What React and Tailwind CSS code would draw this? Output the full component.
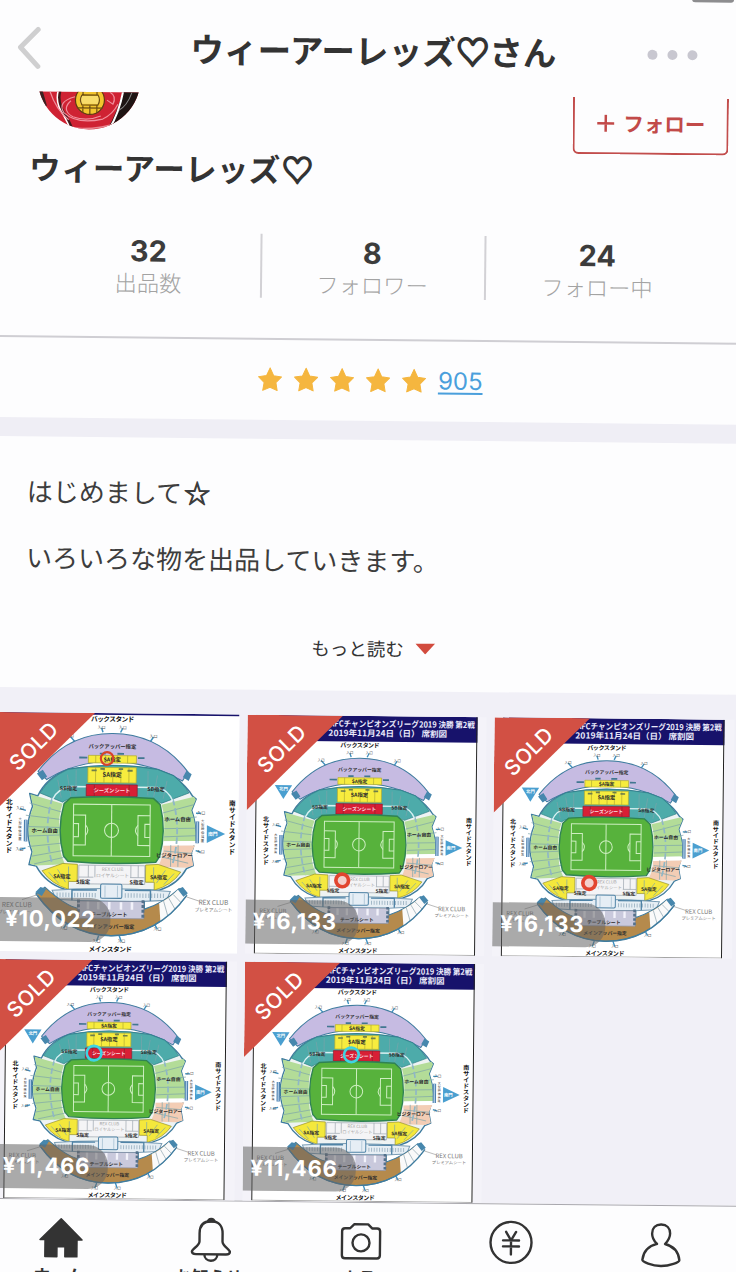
import React from "react";

const JP = "font-['Noto_Sans_CJK_JP',sans-serif]";
const NUM = "font-['Inter','Noto_Sans_CJK_JP',sans-serif]";

const stats = [
  { value: "32", label: "出品数" },
  { value: "8", label: "フォロワー" },
  { value: "24", label: "フォロー中" },
];

// mark: ring drawn on the seat map where the ticket is
const items = [
  { id: 1, price: "¥10,022", zoomed: true, mark: { x: 324, y: 194, r: 17, color: "#d8432b", width: 6 } },
  { id: 2, price: "¥16,133", mark: { x: 289, y: 494, r: 19, color: "#e2452f", width: 11, fill: "#f3d0cc" } },
  { id: 3, price: "¥16,133", mark: { x: 289, y: 494, r: 19, color: "#e2452f", width: 11, fill: "#f3d0cc" } },
  { id: 4, price: "¥11,466", mark: { x: 294, y: 279, r: 22, color: "#3fd3e2", width: 8 } },
  { id: 5, price: "¥11,466", mark: { x: 322, y: 276, r: 22, color: "#3fd3e2", width: 8 } },
];

const tabs = [
  { label: "ホーム", icon: HomeIcon },
  { label: "お知らせ", icon: BellIcon },
  { label: "出品", icon: CameraIcon },
  { label: "メルペイ", icon: YenIcon },
  { label: "マイページ", icon: PersonIcon },
];

function HomeIcon() {
  return (
    <svg width="48" height="48" viewBox="0 0 48 48" fill="#333" stroke="#333" strokeWidth="1.5" strokeLinejoin="round">
      <path d="M24 5 L45 26 H40 V43 H28 V33 H20 V43 H8 V26 H3 Z" />
    </svg>
  );
}

function BellIcon() {
  return (
    <svg width="48" height="48" viewBox="0 0 48 48" fill="none" stroke="#333" strokeWidth="2.4" strokeLinejoin="round">
      <path d="M19 7.500 Q20 2.500 24 2.500 Q28 2.500 29 7.500 Z" fill="#333" stroke="none" />
      <path d="M24 6 C16 6 12.500 11 12.500 18 V26 C12.500 31 5 33.500 5 36.500 C5 38.500 7 39 9 39 H39 C41 39 43 38.500 43 36.500 C43 33.500 35.500 31 35.500 26 V18 C35.500 11 32 6 24 6 Z" />
      <path d="M17.500 39 C17.500 43 20.500 45.500 24 45.500 C27.500 45.500 30.500 43 30.500 39" />
    </svg>
  );
}

function CameraIcon() {
  return (
    <svg width="48" height="48" viewBox="0 0 48 48" fill="none" stroke="#333" strokeWidth="2.4" strokeLinejoin="round">
      <path d="M8 11.500 H13 L17 7.500 H31 L35 11.500 H40 C42 11.500 43 12.500 43 14.500 V38.500 C43 40.500 42 41.500 40 41.500 H8 C6 41.500 5 40.500 5 38.500 V14.500 C5 12.500 6 11.500 8 11.500 Z" />
      <circle cx="24" cy="26" r="8.500" />
    </svg>
  );
}

function YenIcon() {
  return (
    <svg width="48" height="48" viewBox="0 0 48 48" fill="none" stroke="#333" strokeWidth="2.4" strokeLinecap="round">
      <circle cx="24" cy="24" r="20.500" />
      <path d="M19 13.500 L24 22 L29 13.500 M24 22 V36 M16 22 H32 M16 28 H32" />
    </svg>
  );
}

function PersonIcon() {
  return (
    <svg width="48" height="48" viewBox="0 0 48 48" fill="none" stroke="#333" strokeWidth="2.4" strokeLinejoin="round" strokeLinecap="round">
      <path d="M20 24 C17 21 15 17.500 15 13.500 C15 8 18.500 4.500 24 4.500 C29.500 4.500 33 8 33 13.500 C33 17.500 31 21 28 24 C36 26 41.500 31 42.500 40 C42.500 42 33 46 24 46 C15 46 5.500 42 5.500 40 C6.500 31 12 26 20 24" />
    </svg>
  );
}

function Avatar() {
  return (
    <svg width="104" height="38" viewBox="0 66 104 38">
      <defs>
        <clipPath id="avatar-clip">
          <circle cx="52" cy="52" r="51.500" />
        </clipPath>
      </defs>
      <g clipPath="url(#avatar-clip)">
        <rect width="104" height="104" fill="#cf2233" />
        <path d="M104 50 V104 H70 Q82 84 87 60 Z" fill="#1f1413" />
        <path d="M0 60 H4 L10 80 L5 84 Z" fill="#3a2222" />
        <g fill="none">
          <path d="M25 60 Q18 75 29 90 Q33 97 36 104" stroke="#3b1c1c" strokeWidth="2.500" />
          <path d="M23 60 Q16 75 27 90 Q31 97 34 104" stroke="#fff" strokeWidth="1.500" />
          <path d="M87 60 Q83 86 72 104" stroke="#fff" strokeWidth="2" />
          <path d="M95 66 Q90 80 82 84" stroke="#888" strokeWidth="1" />
          <g stroke="#f08f9c" strokeWidth="1.200">
            <path d="M13 66 Q19 84 32 94" />
            <path d="M38 71 Q20 76 27 87 Q40 99 66 93 Q76 88 81 78" />
            <path d="M34 75 Q24 84 36 91 Q50 96 64 90" />
            <path d="M73 66 Q80 70 76 78 L70 74" />
          </g>
          <path d="M20 100 Q52 107 84 96" stroke="#ea8791" strokeWidth="1.500" />
        </g>
        <circle cx="53" cy="74" r="14.500" fill="#f3c52e" stroke="#5c3b12" strokeWidth="1.200" />
        <path d="M43 70 H62 V78 H43 Z" fill="#f8dc6b" />
        <path d="M45 69 H61 Q64 74 61 79 H45 Q42 74 45 69 M46 79 V87 M53 79 V88 M60 79 V87 M46 66 V69 M60 66 V69 M40 82 H66" fill="none" stroke="#6d4d12" strokeWidth="1.200" />
      </g>
    </svg>
  );
}

// ticks around the bowl, each with a tiny gate label
const gates = [
  [222, 135, 236, 150], [308, 112, 312, 124], [366, 112, 360, 124], [450, 135, 440, 150],
  [88, 330, 104, 335], [88, 440, 104, 436], [582, 338, 568, 338], [582, 442, 568, 438],
  [210, 650, 218, 636], [300, 684, 306, 668], [368, 684, 362, 668], [466, 650, 458, 636],
];

function SeatMap({ zoomed, mark }) {
  const viewBox = zoomed ? "29.4 72.6 653 641" : "0 0 718 718";
  return (
    <svg viewBox={viewBox} preserveAspectRatio="none" className={`block h-full w-full ${JP}`}>
      <rect x="26" y="0" width="664" height="718" fill="#fff" />
      <rect x="26" y="0" width="664" height="77" fill="#17126b" />
      {!zoomed && (
        <g>
          <path d="M28 0 V716 M688 0 V716" stroke="#222" strokeWidth="3" />
          <path d="M28 715 H688" stroke="#777" strokeWidth="2" />
          <g fill="#e9e9fa" fontWeight="700" fontSize="25">
            <text x="246" y="33" textLength="436" lengthAdjust="spacingAndGlyphs">AFCチャンピオンズリーグ2019 決勝 第2戦</text>
            <text x="243" y="61" textLength="356" lengthAdjust="spacingAndGlyphs">2019年11月24日（日） 席割図</text>
          </g>
        </g>
      )}

      {/* gate ticks */}
      {gates.map(([x, y, tx, ty]) => (
        <g key={`${x}-${y}`}>
          <path d={`M${x} ${y} L${tx} ${ty}`} stroke="#3d8fbf" strokeWidth="4" />
          <text x={x} y={y + 3} fontSize="11" textAnchor="middle" fill="#555">入口</text>
        </g>
      ))}

      {/* upper back stand */}
      <path d="M136 230 Q215 127 339 127 Q466 127 545 228 L530 252 Q440 202 339 202 Q240 202 160 252 Z" fill="#c6bbe2" stroke="#3f7c9f" strokeWidth="3" strokeLinejoin="round" />
      <path d="M133 236 l16 -10 l12 18 l-14 10 z M531 242 l10 -18 l14 10 l-8 18 z" fill="#4787ad" />

      {/* bowl */}
      <path d="M218 224 Q340 202 462 222 L505 238 Q545 270 558 292 L568 300 L556 330 Q578 390 556 446 L562 478 L544 486 Q520 530 470 545 H212 Q160 530 134 484 L114 480 L122 446 Q98 386 122 324 L114 290 L136 296 Q160 246 218 224 Z" fill="#eef3f3" stroke="#3f7c9f" strokeWidth="4" strokeLinejoin="round" />
      <path d="M218 224 Q340 202 462 222 L505 238 Q535 262 548 284 L474 312 Q450 300 430 300 H248 Q220 300 204 312 L142 288 Q168 246 218 224 Z" fill="#4dabaa" stroke="#2e7f85" strokeWidth="2" />
      <path d="M116 292 L204 316 Q190 350 198 400 Q192 440 212 478 L134 482 L116 478 L124 444 Q100 386 124 326 Z" fill="#b3dc98" />
      <path d="M562 294 L474 316 Q486 350 480 414 L568 412 Q570 370 555 330 L567 302 Z" fill="#b3dc98" />
      <path d="M480 414 L568 412 V424 L480 426 Z" fill="#fff" />
      <path d="M480 426 L566 424 L556 446 L562 478 L544 484 L466 482 Q482 450 480 426 Z" fill="#f3cdb5" />
      <path d="M150 496 L206 476 L246 478 V524 H222 V545 Q176 532 150 496 Z" fill="#f4e83c" stroke="#938f2b" strokeWidth="2" />
      <path d="M528 496 L466 476 L432 478 V524 H456 V545 Q504 532 528 496 Z" fill="#f4e83c" stroke="#938f2b" strokeWidth="2" />

      {/* aisles */}
      <g stroke="#7ba3aa" strokeWidth="2" fill="none">
        <path d="M114 315 L200 338 M104 348 L196 358 M102 378 L196 380 M102 404 L196 400 M110 432 L200 422 M118 458 L204 442 M128 478 L208 460" />
        <path d="M562 315 L478 338 M570 348 L482 358 M572 378 L482 380 M570 398 L482 402 M560 446 L482 440 M548 472 L476 456 M520 424 V482 M500 424 V482" />
        <path d="M190 252 L200 300 M216 238 L226 296 M240 226 V292 M436 226 V292 M462 238 L452 296 M488 252 L478 300" />
        <path d="M176 300 Q150 386 178 480 M504 300 Q530 386 504 480" stroke="#8fb7c6" strokeWidth="5" strokeDasharray="18 8" />
        <path d="M168 500 L196 530 M192 492 L214 526 M222 484 V522 M510 500 L482 530 M486 492 L462 526 M454 484 V522" />
      </g>
      <path d="M176 306 Q188 276 226 270 H462 Q492 276 504 306" fill="none" stroke="#d8f0f2" strokeWidth="4" />

      {/* centre back blocks */}
      <g stroke="#b0aa35" strokeWidth="2">
        <rect x="273" y="186" width="131" height="20" fill="#f7ec3e" />
        <rect x="272" y="218" width="132" height="41" fill="#f7ec3e" />
        <path d="M293 186 V206 M320 186 V206 M352 186 V206 M380 186 V206 M293 218 V259 M316 218 V259 M340 244 V259 M362 218 V259 M384 218 V259" />
      </g>
      <path d="M248 192 H270 M408 192 H426 M304 181 H320 M352 181 H370" stroke="#427791" strokeWidth="5" />
      <path d="M282 226 H296 M380 226 H394 M306 222 H318 M356 222 H368" stroke="#6f7f4a" strokeWidth="5" />
      <rect x="268" y="264" width="139" height="31" fill="#d81f35" stroke="#8c2130" strokeWidth="2" />
      <path d="M290 264 V295 M385 264 V295" stroke="#8c2130" strokeWidth="2" />

      {/* pitch */}
      <path d="M226 300 Q338 292 452 300 L470 316 Q488 386 470 454 L460 470 Q338 480 220 470 L208 456 Q188 386 208 316 Z" fill="#57b23c" stroke="#2f8253" strokeWidth="4" strokeLinejoin="round" />
      <g fill="none" stroke="#cdeec0" strokeWidth="3">
        <rect x="234" y="317" width="209" height="138" />
        <path d="M338 317 V455" />
        <circle cx="338" cy="386" r="19" />
        <path d="M234 346 H267 V426 H234 M234 369 H248 V404 H234 M443 346 H410 V426 H443 M443 369 H429 V404 H443" />
        <path d="M267 372 Q280 386 267 400 M410 372 Q397 386 410 400" />
      </g>

      {/* main stand, lower tier */}
      <path d="M250 480 H430 V530 H250 Z" fill="#f4f4f6" stroke="#9aa3ad" strokeWidth="2" />
      <path d="M276 480 V512 M294 480 V512 M392 480 V512 M412 480 V512 M250 512 H290 M390 512 H430" stroke="#9aa3ad" strokeWidth="2" />
      <path d="M178 548 Q340 536 500 548 L490 572 Q340 582 188 572 Z" fill="#e6eef4" stroke="#7a9db5" strokeWidth="3" />
      <path d="M190 560 H300 M376 560 H488" stroke="#a4b9c8" strokeWidth="12" strokeDasharray="3 5" />
      <rect x="310" y="530" width="58" height="38" rx="4" fill="#e6eef5" stroke="#4f83a6" strokeWidth="3" />
      <path d="M322 534 V566 M356 534 V566" stroke="#9ab8cc" strokeWidth="2" />
      <path d="M232 574 V546 H300 M446 574 V546 H376" fill="none" stroke="#4f83a6" strokeWidth="4" />

      {/* main stand, upper tier */}
      <path d="M158 540 Q215 590 250 596 V576 H430 V596 Q480 580 524 540 L545 558 Q466 668 339 668 Q215 668 134 558 Z" fill="#b58a4c" stroke="#3f7c9f" strokeWidth="3" strokeLinejoin="round" />
      <path d="M470 580 Q500 566 524 540 L545 558 Q516 602 474 630 Z" fill="#fafafa" />
      <path d="M482 574 L494 614 M496 566 L514 596 M508 556 L530 578" stroke="#8aa0ab" strokeWidth="2" />
      <path d="M132 554 l14 -14 l16 4 l-12 20 z M520 542 l14 -6 l14 16 l-12 10 z" fill="#4787ad" />
      <rect x="248" y="576" width="180" height="46" fill="#c9c9dc" stroke="#8d93a6" strokeWidth="2" />
      <path d="M276 578 V598 M304 578 V598 M334 578 V598 M366 578 V598 M396 578 V598" stroke="#f2f2fa" strokeWidth="7" />
      <path d="M250 572 V622 M426 572 V622" stroke="#54718c" strokeWidth="8" strokeDasharray="8 5" />
      <path d="M134 558 Q215 668 339 668 Q466 668 545 558" fill="none" stroke="#3f7c9f" strokeWidth="4" />

      {/* side screens and direction arrows */}
      <path d="M104 360 V418 M572 360 V418" stroke="#4c7fae" strokeWidth="10" />
      <path d="M104 360 V418 M572 360 V418" stroke="#a9c9e4" strokeWidth="4" />
      <path d="M598 370 L648 393 L598 417 Z" fill="#4a9fd0" />
      {!zoomed && <path d="M84 210 L136 210 L110 252 Z" fill="#4a9fd0" />}
      <g fill="#fff" fontSize="13" fontWeight="700" textAnchor="middle">
        <text x="614" y="398">南門</text>
        {!zoomed && <text x="110" y="226">北門</text>}
      </g>

      {/* names */}
      <g fill="#111" fontWeight="700" textAnchor="middle">
        <text x="338" y="95" fontSize="18" textLength="118">バックスタンド</text>
        <text x="338" y="711" fontSize="18" textLength="118">メインスタンド</text>
      </g>
      <g fill="#2c2c2c" fontWeight="700" fontSize="14.500" textAnchor="middle">
        <text x="338" y="167">バックアッパー指定</text>
        <text x="338" y="202">SA指定</text>
        <text x="338" y="243" fontSize="16">SA指定</text>
        <text x="220" y="280">SB指定</text>
        <text x="458" y="280">SB指定</text>
        <text x="156" y="394">ホーム自由</text>
        <text x="518" y="360">ホーム自由</text>
        <text x="510" y="457">ビジターロアー</text>
        <text x="204" y="516">SA指定</text>
        <text x="468" y="516">SA指定</text>
        <text x="262" y="530">S指定</text>
        <text x="408" y="530">S指定</text>
        <text x="334" y="617">テーブルシート</text>
        <text x="338" y="649">メインアッパー指定</text>
      </g>
      <text x="338" y="285" fontSize="14.500" fontWeight="700" textAnchor="middle" fill="#f9dfe2">シーズンシート</text>
      <g fill="#a3a3a3" fontSize="13" textAnchor="middle">
        <text x="342" y="495">REX CLUB</text>
        <text x="342" y="512">ロイヤルシート</text>
      </g>
      <g fill="#777" fontSize="18" textAnchor="middle">
        <text x="82" y="594">REX CLUB</text>
        <text x="618" y="583">REX CLUB</text>
        <text x="82" y="612" fontSize="13">プレミアムシート</text>
        <text x="618" y="601" fontSize="13">プレミアムシート</text>
        <path d="M96 574 L140 560 M582 574 L544 562" stroke="#999" strokeWidth="2" />
      </g>
      <g fill="#111" fontWeight="700" fontSize="18">
        {[..."北サイドスタンド"].map((c, i) => (
          <text key={i} x="50" y={319 + i * 18.500}>{c}</text>
        ))}
        {[..."南サイドスタンド"].map((c, i) => (
          <text key={i} x="658" y={317 + i * 18.500}>{c}</text>
        ))}
      </g>
      <g fill="#333" fontSize="9">
        {[..."大型映像装置"].map((c, i) => (
          <text key={i} x="84" y={362 + i * 10.500}>{c}</text>
        ))}
        {[..."大型映像装置"].map((c, i) => (
          <text key={i} x="582" y={362 + i * 10.500}>{c}</text>
        ))}
      </g>

      <circle cx={mark.x} cy={mark.y} r={mark.r} fill={mark.fill || "none"} stroke={mark.color} strokeWidth={mark.width} />
    </svg>
  );
}

function ItemCard({ item }) {
  return (
    <div className={`relative h-[239.5px] w-[239.5px] overflow-hidden ${item.zoomed ? "bg-white" : "bg-[#f4f3f9]"}`}>
      <SeatMap zoomed={item.zoomed} mark={item.mark} />
      <svg className="absolute left-0 top-0" width="96" height="96" viewBox="0 0 96 96">
        <path d="M0 0 H95.500 L0 95.500 Z" fill="#d25044" />
      </svg>
      <span className={`absolute left-0 top-[22px] w-[70px] -rotate-45 text-center text-[21px] leading-6 font-medium tracking-[0.5px] text-white ${NUM}`}>
        SOLD
      </span>
      <span className={`absolute left-0 top-[185px] flex h-[44px] w-[113px] items-center rounded-r-[20px] bg-[#646464]/55 pl-[8px] text-[22px] font-bold tracking-[0.7px] whitespace-nowrap text-white ${NUM}`}>
        {item.price}
      </span>
    </div>
  );
}

function Star() {
  return (
    <svg width="26" height="26" viewBox="0 0 26 26" fill="#f5b63f" stroke="#f5b63f" strokeWidth="1" strokeLinejoin="round">
      <path d="M13 1 L16.600 8.800 L24.500 10 L18.900 15.700 L20.200 23.600 L13 20.400 L5.800 23.600 L7.100 15.700 L1.500 10 L9.400 8.800 Z" />
    </svg>
  );
}

const App = () => {
  return (
    <div className={`h-[1272px] w-[736px] overflow-hidden bg-[#fdfdfe] text-[#333] ${JP}`}>
      <div className="-mt-2 w-[760px] origin-[0_8px] rotate-[0.6deg]">
        {/* status bar leftover */}
        <div className="flex h-2 pl-[692px]">
          <div className="h-[3px] w-[42px] rounded-b bg-[#8d8d8f]" />
        </div>

        <header className="flex h-[91px] items-center pt-[4px] pl-[17px]">
          <svg width="26" height="44" viewBox="0 0 26 44" fill="none" stroke="#cfcfd0" strokeWidth="5" strokeLinecap="round" strokeLinejoin="round">
            <path d="M21.500 3 L4 21 L21.500 40" />
          </svg>
          <h1 className="-mt-1 ml-[81px] w-[500px] text-center text-[33.5px] leading-none font-bold tracking-[0.1px] whitespace-nowrap">
            ウィーアーレッズ<span className="[-webkit-text-stroke:2px_#333]">♡</span>さん
          </h1>
          <div className="ml-[24px] flex gap-[10px]">
            <span className="size-[10px] rounded-full bg-[#c8c7d0]" />
            <span className="size-[10px] rounded-full bg-[#c8c7d0]" />
            <span className="size-[10px] rounded-full bg-[#c8c7d0]" />
          </div>
        </header>

        {/* profile */}
        <section className="h-[246px] border-b-2 border-[#cfced3]">
          <div className="flex h-14 pl-[38px]">
            <Avatar />
            <button className="ml-[432px] flex h-[57px] w-[156px] items-center justify-center rounded-b-md border-2 border-t-0 border-[#c24d4c] pb-[4px] text-[20.5px] font-bold whitespace-nowrap text-[#c24a49]">
              <svg className="mr-[9px]" width="18" height="18" viewBox="0 0 18 18" stroke="#c24a49" strokeWidth="2.500">
                <path d="M9 0.500 V17.500 M0.500 9 H17.500" />
              </svg>
              フォロー
            </button>
          </div>
          <h2 className="-mt-[2px] h-[42px] pl-[31px] text-[31.5px] leading-10 font-bold tracking-[0.3px]">
            ウィーアーレッズ<span className="ml-[1px] [-webkit-text-stroke:1.8px_#333]">♡</span>
          </h2>
          <div className="mt-11 ml-[41px] flex h-16 divide-x-2 divide-[#d2d1d5]">
            {stats.map((s) => (
              <div key={s.label} className="flex w-[224px] flex-col items-center pt-[4px] pr-[2px]">
                <span className={`text-[29px] leading-[30px] font-bold text-[#3c3c3c] ${NUM}`}>{s.value}</span>
                <span className="text-[22.3px] leading-[30px] font-light text-[#a3a3a3]">{s.label}</span>
              </div>
            ))}
          </div>
        </section>

        {/* rating */}
        <section className="flex h-[80px] items-center pl-[261px]">
          <div className="flex gap-[10px]">
            {[1, 2, 3, 4, 5].map((n) => (
              <Star key={n} />
            ))}
          </div>
          <a className={`ml-[11px] text-[24px] text-[#4a9fdc] underline decoration-2 underline-offset-3 ${NUM}`}>905</a>
        </section>

        <div className="h-[19px] bg-[#efeef5]" />

        {/* bio */}
        <section className="h-[251px] pt-[37px] pl-8">
          <p className="text-[26px] leading-[33px] text-[#3d3d3d]">
            はじめまして<span className="ml-[2px] [-webkit-text-stroke:1px_#3d3d3d]">☆</span>
            <br />
            <br />
            いろいろな物を出品していきます。
          </p>
          <div className="mt-[62px] ml-[286px] flex h-5 items-center text-[18.5px] leading-5">
            もっと読む
            <svg className="ml-[11px]" width="20" height="11" viewBox="0 0 20 11">
              <path d="M0 0 H20 L10 11 Z" fill="#d24b3e" />
            </svg>
          </div>
        </section>

        {/* items */}
        <section className="grid h-[511px] grid-cols-[repeat(3,239.5px)] content-start gap-x-2 gap-y-[7.5px] bg-[#f1f0f7] pt-[24.5px] pl-[7px]">
          {items.map((item) => (
            <ItemCard key={item.id} item={item} />
          ))}
        </section>

        <nav className="grid h-[100px] grid-cols-[repeat(5,150px)] border-t border-[#a9a8ae] bg-[#fdfdfe] pt-[14px]">
          {tabs.map(({ label, icon: Icon }) => (
            <div key={label} className="-ml-[3px] flex flex-col items-center">
              <Icon />
              <span className="mt-[3px] pr-[3px] text-[17px] leading-5 font-bold">{label}</span>
            </div>
          ))}
        </nav>
      </div>
    </div>
  );
};

export default App;
